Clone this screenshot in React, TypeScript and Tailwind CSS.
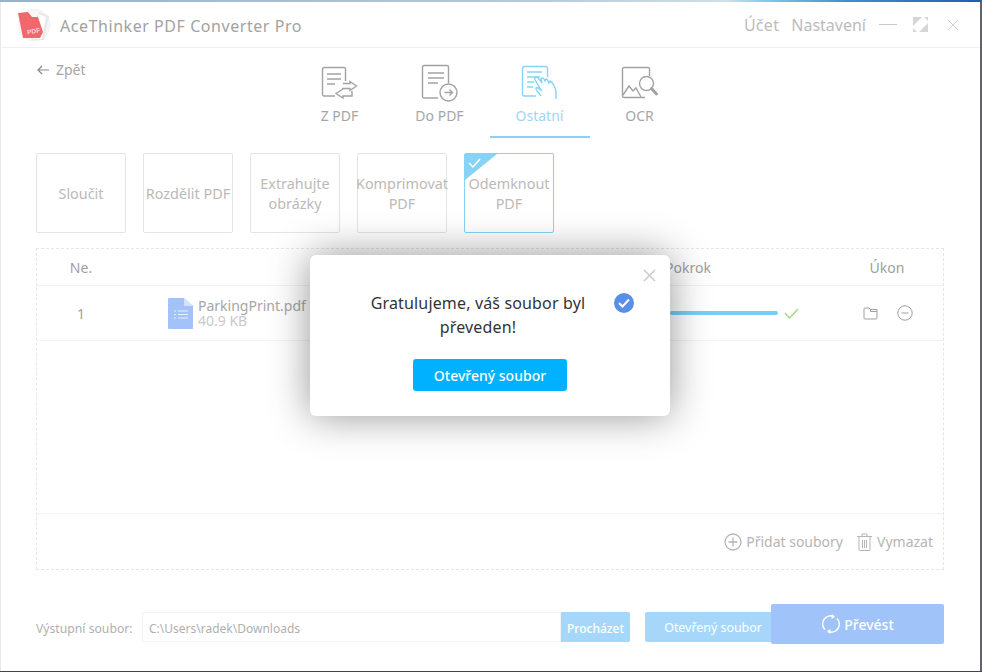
import React from "react";

const font = { fontFamily: '"Noto Sans", "Open Sans", sans-serif' };

function Logo() {
  return (
    <svg width="34" height="34" viewBox="0 0 34 34">
      <circle cx="17" cy="17" r="16" fill="#f7f7f7" stroke="#eeeeee" strokeWidth="0.6" />
      <path d="M22 4 L32 8 L27 32 L14 32Z" fill="#e8e8e8" />
      <path d="M22 6 L29 9 L25 31 L16 31Z" fill="#ffffff" />
      <path d="M1 5 L11 4 L15 9 L21 9 L26 24 L23 30 L6 30Z" fill="#f0686e" />
      <text x="10.5" y="26.5" fontSize="6.5" fontWeight="700" fill="#fbd5d5" transform="rotate(-10 10.5 26.5)" fontFamily="Liberation Sans">PDF</text>
    </svg>
  );
}

function TabIcon({ kind }: { kind: string }) {
  const c = kind === "other" ? "#86d3f5" : "#a2a2a2";
  if (kind === "from")
    return (
      <svg width="38" height="34" viewBox="0 0 38 34" fill="none" stroke={c} strokeWidth="1.4">
        <path d="M14 30 H3 a1.5 1.5 0 0 1-1.5-1.5 V3 a1.5 1.5 0 0 1 1.5-1.5 H23 a1.5 1.5 0 0 1 1.5 1.5 V15" />
        <path d="M6 8 H20 M6 13 H20 M6 18 H14" />
        <path d="M22 17.5 H29 V15.5 L35.5 20 L29 24.5 V22.5 H21" />
        <path d="M22 23 L15 27.5 L22 32 V30 H31 V25" />
      </svg>
    );
  if (kind === "to")
    return (
      <svg width="38" height="38" viewBox="0 0 38 38" fill="none" stroke={c} strokeWidth="1.4">
        <path d="M17 34 H3 a1.5 1.5 0 0 1-1.5-1.5 V3 a1.5 1.5 0 0 1 1.5-1.5 H26 a1.5 1.5 0 0 1 1.5 1.5 V19" />
        <path d="M7 9 H23 M7 14 H23 M7 19 H17" />
        <circle cx="27.5" cy="28.5" r="8.5" />
        <path d="M23.5 28.5 H31 M28.5 25.5 L31.5 28.5 L28.5 31.5" />
      </svg>
    );
  if (kind === "other")
    return (
      <svg width="38" height="36" viewBox="0 0 38 36" fill="none" stroke={c} strokeWidth="1.4">
        <path d="M15 31 H3 a1.5 1.5 0 0 1-1.5-1.5 V3 a1.5 1.5 0 0 1 1.5-1.5 H25 a1.5 1.5 0 0 1 1.5 1.5 V12" />
        <path d="M6 7 H21 M6 12 H19 M6 17 H13 M6 22 H12" />
        <path d="M20 31 C17 27 14 24 15 23 C17 22 18 24 20 25 L14 15 C13 12 16 11 18 14 L21 18 L20 14 C21 12 23 13 24 16 L25 14 C27 14 27 16 28 18 L29 16 C32 17 35 24 35 27 L35 34" />
      </svg>
    );
  return (
    <svg width="38" height="34" viewBox="0 0 38 34" fill="none" stroke={c} strokeWidth="1.4">
      <path d="M24 31.5 H3 a1.5 1.5 0 0 1-1.5-1.5 V3 a1.5 1.5 0 0 1 1.5-1.5 H27 a1.5 1.5 0 0 1 1.5 1.5 V10" />
      <path d="M2 29 L8 20 L12 25 L15 22 L20 31" />
      <circle cx="25.5" cy="17.5" r="7" />
      <path d="M30.5 22.5 L35.5 28" strokeWidth="3" strokeLinecap="round" />
    </svg>
  );
}

function Tab({ label, kind, active }: { label: string; kind: string; active?: boolean }) {
  return (
    <div className={`w-[100px] h-[78px] flex flex-col items-center border-b-2 ${active ? "border-[#86d3f5]" : "border-transparent"}`}>
      <div className="h-[38px] mt-[4px] flex items-center justify-center">
        <TabIcon kind={kind} />
      </div>
      <div className={`mt-[4px] text-[14px] leading-[20px] ${active ? "text-[#9fd6f2]" : "text-[#a6a6a6]"}`}>{label}</div>
    </div>
  );
}

function Tool({ label, active }: { label: string; active?: boolean }) {
  return (
    <div
      className={`relative w-[90px] h-[80px] shrink-0 rounded-[2px] border flex items-center justify-center text-center text-[14.4px] leading-[20px] text-[#bdb9b7] ${
        active ? "border-[#86d3f5]" : "border-[#e4e4e4]"
      }`}
    >
      {active && (
        <svg className="absolute left-0 top-0" width="33" height="27" viewBox="0 0 33 27">
          <path d="M0 0 H32 L0 26Z" fill="#86d3f5" />
          <path d="M4 9 L8 13 L15 5" fill="none" stroke="#fff" strokeWidth="1.5" />
        </svg>
      )}
      <span className="whitespace-pre pt-[2px]">{label}</span>
    </div>
  );
}

export default function App() {
  return (
    <div className="relative w-[982px] h-[672px] overflow-hidden bg-white" style={font}>
      <div className="w-full h-[2px] bg-[linear-gradient(90deg,#9ab2c8_0%,#b6cad8_55%,#d0dfe8_74%,#7ccbea_78%,#3f8fd0_86%,#1e5fae_100%)]" />
      <div className="flex h-[669px]">
        <div className="w-[1px] bg-[#e8e8e8]" />
        <div className="w-[979px] flex flex-col bg-white">
          {/* title bar */}
          <div className="h-[46px] shrink-0 flex items-center border-b border-[#f0f0f0] pl-[16px] pr-[21px]">
            <Logo />
            <div className="ml-[9px] mt-[2px] text-[16px] tracking-[0.55px] text-[#a2a2a2] flex-1">AceThinker PDF Converter Pro</div>
            <div className="text-[16px] tracking-[0.3px] text-[#bcbcbc]">Účet</div>
            <div className="ml-[12px] text-[16px] text-[#bcbcbc]">Nastavení</div>
            <div className="ml-[13px] w-[18px] h-[1px] bg-[#c8c8c8]" />
            <svg className="ml-[16px]" width="15" height="15" viewBox="0 0 15 15">
              <path d="M0 0 H9 L0 9Z M15 15 H6 L15 6Z" fill="#d6d6d6" />
              <path d="M11 0 H15 V4Z M0 15 V11 L4 15Z" fill="#d6d6d6" />
            </svg>
            <svg className="ml-[19px]" width="12" height="12" viewBox="0 0 12 12" stroke="#d2d2d2" strokeWidth="1">
              <path d="M1 1 L11 11 M11 1 L1 11" />
            </svg>
          </div>
          {/* nav + tabs */}
          <div className="h-[90px] shrink-0 relative flex justify-center pt-[12px] pr-[2px]">
            <div className="absolute left-[36px] top-[12px] flex items-center text-[14px] leading-[20px] text-[#a5a5a5]">
              <svg className="mr-[7px]" width="12" height="10" viewBox="0 0 12 10" fill="none" stroke="#8a8a8a" strokeWidth="1.2">
                <path d="M12 5 H1 M5 1 L1 5 L5 9" />
              </svg>
              Zpět
            </div>
            <Tab label="Z PDF" kind="from" />
            <Tab label="Do PDF" kind="to" />
            <Tab label="Ostatní" kind="other" active />
            <Tab label="OCR" kind="ocr" />
          </div>
          {/* tool cards */}
          <div className="mt-[15px] ml-[35px] flex gap-[17px]">
            <Tool label="Sloučit" />
            <Tool label="Rozdělit PDF" />
            <Tool label={"Extrahujte\nobrázky"} />
            <Tool label={"Komprimovat\nPDF"} />
            <Tool label={"Odemknout\nPDF"} active />
          </div>
          {/* table */}
          <div className="mt-[15px] ml-[35px] w-[908px] h-[322px] shrink-0 border border-dashed border-[#e6e6e6] flex flex-col text-[14px]">
            <div className="h-[37px] shrink-0 flex items-center border-b border-[#f2f2f2] text-[#a0a0a0]">
              <div className="w-[88px] text-center">Ne.</div>
              <div className="w-[345px] text-center pl-[171px]">Soubor</div>
              <div className="flex-1 pl-[195px]">Pokrok</div>
              <div className="w-[112px] text-center">Úkon</div>
            </div>
            <div className="h-[55px] shrink-0 flex items-center border-b border-[#f2f2f2]">
              <div className="w-[88px] text-center text-[#a0a0a0]">1</div>
              <div className="ml-[43px] flex items-center">
                <svg width="25" height="31" viewBox="0 0 25 31">
                  <path d="M1 0 H16 L25 8 V31 H1 a1 1 0 0 1-1-1 V1 a1 1 0 0 1 1-1Z" fill="#a3c3f8" />
                  <path d="M16 0 L25 8 H16Z" fill="#d3e2fb" />
                  <path d="M10 13 H20 M10 16.5 H20 M10 20 H20 M6 13 H8 M6 16.5 H8 M6 20 H8" stroke="#e8f0fe" strokeWidth="1" />
                </svg>
                <div className="ml-[5px] flex flex-col">
                  <div className="text-[14px] leading-[15px] text-[#a6a6a6]">ParkingPrint.pdf</div>
                  <div className="text-[14px] leading-[15px] text-[#c9c9c9]">40.9 KB</div>
                </div>
              </div>
              <div className="ml-[364px] w-[108px] h-[4px] rounded-full bg-[#7ccdf3]" />
              <svg className="ml-[6px]" width="15" height="11" viewBox="0 0 15 11" fill="none" stroke="#a5d88f" strokeWidth="1.5">
                <path d="M1 5 L5.5 10 L14 1" />
              </svg>
              <svg className="ml-[64px]" width="15" height="14" viewBox="0 0 15 14" fill="none" stroke="#a0a0a0" strokeWidth="1">
                <path d="M1 3 a1 1 0 0 1 1-1 H6 L7.5 3.5 H14 V12 a1 1 0 0 1-1 1 H2 a1 1 0 0 1-1-1Z M7.5 3.5 V5.5 H14" />
              </svg>
              <svg className="ml-[19px]" width="16" height="16" viewBox="0 0 16 16" fill="none" stroke="#a0a0a0" strokeWidth="1">
                <circle cx="8" cy="8" r="7.2" />
                <path d="M4.5 8 H11.5" />
              </svg>
            </div>
            <div className="flex-1" />
            <div className="h-[56px] shrink-0 flex items-center justify-end border-t border-[#f2f2f2] pr-[10px] text-[#b5b5b5] text-[14px]">
              <svg width="18" height="18" viewBox="0 0 18 18" fill="none" stroke="#b5b5b5" strokeWidth="1.3">
                <circle cx="9" cy="9" r="8" />
                <path d="M4.5 9 H13.5 M9 4.5 V13.5" />
              </svg>
              <span className="ml-[4px]">Přidat soubory</span>
              <svg className="ml-[14px]" width="15" height="18" viewBox="0 0 15 18" fill="none" stroke="#b5b5b5" strokeWidth="1">
                <path d="M0 3.5 H15 M5 3 V1 H10 V3 M2 4 V16.5 a1 1 0 0 0 1 1 H12 a1 1 0 0 0 1-1 V4 M5.5 7 V15 M7.5 7 V15 M9.5 7 V15" />
              </svg>
              <span className="ml-[5px]">Vymazat</span>
            </div>
          </div>
          {/* bottom */}
          <div className="mt-[34px] ml-[35px] flex items-start h-[40px]">
            <span className="mt-[8px] w-[106px] h-[30px] leading-[30px] pt-[2px] text-[12.2px] text-[#b0b0b0]">Výstupní soubor:</span>
            <div className="mt-[8px] w-[419px] h-[30px] border border-[#f2f2f2] rounded-l-[2px] flex items-center pl-[6px] pt-[3px] text-[12px] text-[#b0b0b0]">
              C:\Users\radek\Downloads
            </div>
            <div className="mt-[8px] w-[69px] h-[30px] rounded-r-[2px] bg-[#a6d7fb] flex items-center justify-center pt-[3px] text-[12px] font-medium text-white">Procházet</div>
            <div className="mt-[8px] ml-[15px] w-[126px] h-[30px] rounded-l-[2px] bg-[#a6d7fb] flex items-center justify-center pl-[10px] pt-[3px] text-[12.4px] text-white">Otevřený soubor</div>
            <div className="w-[173px] h-[40px] rounded-[2px] bg-[#a0c3f9] flex items-center justify-center text-[14px] font-medium text-white">
              <svg className="mr-[3px]" width="20" height="20" viewBox="0 0 20 20" fill="none" stroke="#fff" strokeWidth="1.6">
                <path d="M4 15.5 A8 8 0 0 1 13 2.6 M16 4.5 A8 8 0 0 1 7 17.4" />
                <path d="M11 0 L14 3 L10.5 5 M9 20 L6 17 L9.5 15" fill="#fff" stroke="none" />
              </svg>
              Převést
            </div>
          </div>
        </div>
        <div className="w-[2px] bg-[#5b6470]" />
      </div>
      <div className="h-[1px] bg-[#3f4650]" />

      {/* modal */}
      <div className="absolute left-[310px] top-[255px] w-[360px] h-[161px] rounded-[6px] bg-white shadow-[0_0_40px_rgba(0,0,0,0.42)] flex flex-col items-center">
        <svg className="absolute right-[14px] top-[14px]" width="13" height="13" viewBox="0 0 13 13" stroke="#cdcdcd" strokeWidth="1.6">
          <path d="M1 1 L12 12 M12 1 L1 12" />
        </svg>
        <svg className="absolute left-[304px] top-[38px]" width="20" height="20" viewBox="0 0 20 20">
          <circle cx="10" cy="10" r="10" fill="#5a8fe8" />
          <path d="M5 10 L8.5 13.5 L15 6.5" fill="none" stroke="#fff" strokeWidth="2" />
        </svg>
        <div className="mt-[36px] mr-[24px] w-[240px] text-center text-[16px] tracking-[0.15px] leading-[24px] text-[#333333]">Gratulujeme, váš soubor byl převeden!</div>
        <div className="mt-[20px] w-[154px] h-[32px] rounded-[3px] bg-[#00b1ff] flex items-center justify-center text-[14px] font-medium text-white">Otevřený soubor</div>
      </div>
    </div>
  );
}
